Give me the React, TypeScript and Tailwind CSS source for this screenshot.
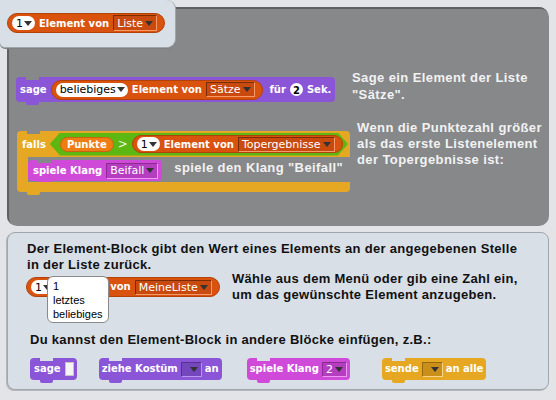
import type { ReactNode } from "react";

const LOOKS = "bg-[#8a55d7]";
const SOUND = "bg-[#cf4ad9]";
const CONTROL = "bg-[#e6a822]";

function Arrow({ className = "fill-[#333]" }: { className?: string }) {
  return (
    <svg width="8" height="5" viewBox="0 0 8 5" className={className} aria-hidden>
      <path d="M0 0h8L4 5z" />
    </svg>
  );
}

function Slot({ children }: { children: ReactNode }) {
  return (
    <span className="inline-flex h-[14px] items-center gap-[1px] rounded-full bg-white pl-[4px] pr-[3px] text-[11px] font-normal leading-none text-black">
      {children}
      <Arrow />
    </span>
  );
}

const DROP_TONES = {
  list: "border-t-[#7a2c04] border-l-[#7a2c04] border-b-[#f59a68] border-r-[#f59a68] bg-[#c84a0e]",
  looks: "border-t-[#553090] border-l-[#553090] border-b-[#b896ee] border-r-[#b896ee] bg-[#7447bd]",
  sound: "border-t-[#8a2a92] border-l-[#8a2a92] border-b-[#ee9af4] border-r-[#ee9af4] bg-[#b43dc0]",
  control: "border-t-[#976909] border-l-[#976909] border-b-[#f8d488] border-r-[#f8d488] bg-[#c98f1a]",
};

function Drop({
  children,
  tone,
  className = "h-[16px]",
}: {
  children?: ReactNode;
  tone: keyof typeof DROP_TONES;
  className?: string;
}) {
  return (
    <span
      className={`inline-flex items-center justify-end gap-[2px] border px-[3px] text-[11px] font-normal leading-none text-white ${DROP_TONES[tone]} ${className}`}
    >
      {children}
      <Arrow />
    </span>
  );
}

function ListReporter({ children, className = "h-[20px]" }: { children: ReactNode; className?: string }) {
  return (
    <span
      className={`inline-flex items-center gap-[4px] rounded-full border border-[#b3410a] bg-[#d9530f] pl-[4px] pr-[7px] text-[10px] font-bold text-white ${className}`}
    >
      {children}
    </span>
  );
}

function Cmd({
  color,
  notch,
  children,
  className = "",
}: {
  color: string;
  notch: string;
  children: ReactNode;
  className?: string;
}) {
  return (
    <div className={`relative inline-flex items-center rounded-[4px] text-[10px] font-bold text-white ${color} ${className}`}>
      <span className={`absolute left-[10px] top-0 h-[3px] w-[13px] ${notch}`} />
      <span className={`absolute -bottom-[3px] left-[10px] h-[3px] w-[13px] rounded-b-[2px] ${color}`} />
      {children}
    </div>
  );
}

const NOTE = "text-[13px] font-bold leading-[16px] tracking-[0.4px] text-[#f2f2f2] [font-family:'Liberation_Sans',Arial,sans-serif]";

export default function App() {
  return (
    <div className="relative h-[400px] w-[556px] overflow-hidden whitespace-nowrap bg-[#e3e4e8] [font-family:'DejaVu_Sans',Verdana,sans-serif]">
      <div className="flex flex-col gap-[6px] px-[7px] pt-[7px]">
        {/* Beispiele */}
        <section className="h-[219px] rounded-[10px] bg-[#86888a] pl-[9px] pt-[62px] shadow-[inset_2px_2px_0_#5e6062]">
          <div className="flex items-start">
            <div className="w-[336px] pt-[7px]">
              <Cmd color={LOOKS} notch="bg-[#86888a]" className="h-[25px] gap-[4px] pl-[4px] pr-[4px]">
                <span>sage</span>
                <ListReporter>
                  <Slot>beliebiges</Slot>
                  <span>Element von</span>
                  <Drop tone="list" className="h-[15px]">
                    Sätze
                  </Drop>
                </ListReporter>
                <span className="ml-[3px]">für</span>
                <span className="grid h-[13px] w-[13px] place-items-center rounded-full bg-white text-[10px] font-bold text-black">
                  2
                </span>
                <span>Sek.</span>
              </Cmd>
            </div>
            <p className={`${NOTE} leading-[17px]`}>
              Sage ein Element der Liste
              <br />
              "Sätze".
            </p>
          </div>

          <div className="mt-[17px] flex items-start">
            <div className="w-[341px] pl-[1px] pt-[11px]">
              <div className="w-[333px]">
                <div className={`relative flex h-[26px] items-center gap-[4px] rounded-t-[4px] pl-[5px] text-[10px] font-bold text-white ${CONTROL}`}>
                  <span className="absolute left-[10px] top-0 h-[3px] w-[13px] bg-[#86888a]" />
                  <span>falls</span>
                  <span className="inline-flex h-[23px] w-[298px] items-center gap-[4px] bg-[#5cb712] pl-[10px] [clip-path:polygon(10px_0,calc(100%-10px)_0,100%_50%,calc(100%-10px)_100%,10px_100%,0_50%)]">
                    <span className="inline-flex h-[15px] items-center rounded-full border border-[#c8640c] bg-[#ee7d16] px-[6px]">
                      Punkte
                    </span>
                    <span className="text-[12px] font-normal text-[#e8f5dc]">&gt;</span>
                    <ListReporter className="h-[18px]">
                      <Slot>1</Slot>
                      <span>Element von</span>
                      <Drop tone="list" className="h-[15px]">
                        Topergebnisse
                      </Drop>
                    </ListReporter>
                  </span>
                </div>
                <div className="flex h-[25px] items-start">
                  <div className={`h-full w-[11px] ${CONTROL}`} />
                  <Cmd color={SOUND} notch="bg-[#86888a]" className="mt-[3px] h-[21px] gap-[4px] pl-[5px] pr-[4px]">
                    <span>spiele Klang</span>
                    <Drop tone="sound">Beifall</Drop>
                  </Cmd>
                  <span className={`${NOTE} ml-[12px] mt-[3px]`}>spiele den Klang "Beifall"</span>
                </div>
                <div className={`relative h-[10px] rounded-b-[4px] ${CONTROL}`}>
                  <span className={`absolute -bottom-[3px] left-[10px] h-[3px] w-[13px] rounded-b-[2px] ${CONTROL}`} />
                </div>
              </div>
            </div>
            <p className={NOTE}>
              Wenn die Punktezahl größer
              <br />
              als das erste Listenelement
              <br />
              der Topergebnisse ist:
            </p>
          </div>
        </section>

        {/* Erklärung */}
        <section className="h-[158px] rounded-[8px] border border-[#a1a6ab] bg-[#d8dfe7] pl-[19px] pt-[8px] text-[13px] font-bold leading-[16px] tracking-[0.3px] text-[#111] shadow-[-1px_1px_0_#b4b8bc]">
          <p className="[font-family:'Liberation_Sans',Arial,sans-serif]">
            Der Element-Block gibt den Wert eines Elements an der angegebenen Stelle
            <br />
            in der Liste zurück.
          </p>
          <div className="-mt-[2px] flex items-start">
            <div className="-ml-[1px] w-[206px] pt-[6px]">
              <div className="relative inline-flex tracking-normal">
                <ListReporter>
                  <Slot>1</Slot>
                  <span>Element</span>
                  <span className="ml-[2px]">von</span>
                  <Drop tone="list" className="h-[15px]">
                    MeineListe
                  </Drop>
                </ListReporter>
                <div className="absolute -top-[1px] left-[21px] flex h-[47px] w-[62px] flex-col rounded-[6px] border border-[#8a8a8a] bg-white px-[5px] pt-[2px] text-[11px] font-normal leading-[14px] text-black [font-family:'Liberation_Sans',Arial,sans-serif]">
                  <span>1</span>
                  <span>letztes</span>
                  <span>beliebiges</span>
                </div>
              </div>
            </div>
            <p className="[font-family:'Liberation_Sans',Arial,sans-serif]">
              Wähle aus dem Menü oder gib eine Zahl ein,
              <br />
              um das gewünschte Element anzugeben.
            </p>
          </div>
          <p className="mt-[29px] pl-[3px] [font-family:'Liberation_Sans',Arial,sans-serif]">
            Du kannst den Element-Block in andere Blöcke einfügen, z.B.:
          </p>
          <div className="mt-[10px] flex items-start pl-[3px] tracking-normal">
            <Cmd color={LOOKS} notch="bg-[#d8dfe7]" className="h-[22px] gap-[4px] pl-[4px] pr-[3px]">
              <span>sage</span>
              <span className="h-[14px] w-[9px] border border-[#c4c4c4] bg-[#f4f4f4]" />
            </Cmd>
            <Cmd color={LOOKS} notch="bg-[#d8dfe7]" className="ml-[22px] h-[22px] gap-[3px] px-[3px]">
              <span>ziehe Kostüm</span>
              <Drop tone="looks" className="h-[15px] w-[21px]" />
              <span>an</span>
            </Cmd>
            <Cmd color={SOUND} notch="bg-[#d8dfe7]" className="ml-[25px] h-[22px] gap-[3px] px-[3px]">
              <span>spiele Klang</span>
              <Drop tone="sound" className="h-[15px] w-[25px]">
                2
              </Drop>
            </Cmd>
            <Cmd color={CONTROL} notch="bg-[#d8dfe7]" className="ml-[32px] h-[22px] gap-[3px] px-[3px]">
              <span>sende</span>
              <Drop tone="control" className="h-[15px] w-[21px]" />
              <span>an alle</span>
            </Cmd>
          </div>
        </section>
      </div>

      {/* Reiter oben links */}
      <div className="absolute left-0 top-0 flex h-[48px] w-[176px] items-start rounded-bl-[5px] rounded-br-[9px] rounded-tr-[9px] border border-l-0 border-t-0 border-[#a0a5aa] bg-[#d9dfe7] pl-[7px] pt-[13px] shadow-[0_1px_0_#7f8184]">
        <ListReporter>
          <Slot>1</Slot>
          <span>Element von</span>
          <Drop tone="list">Liste</Drop>
        </ListReporter>
      </div>
    </div>
  );
}
